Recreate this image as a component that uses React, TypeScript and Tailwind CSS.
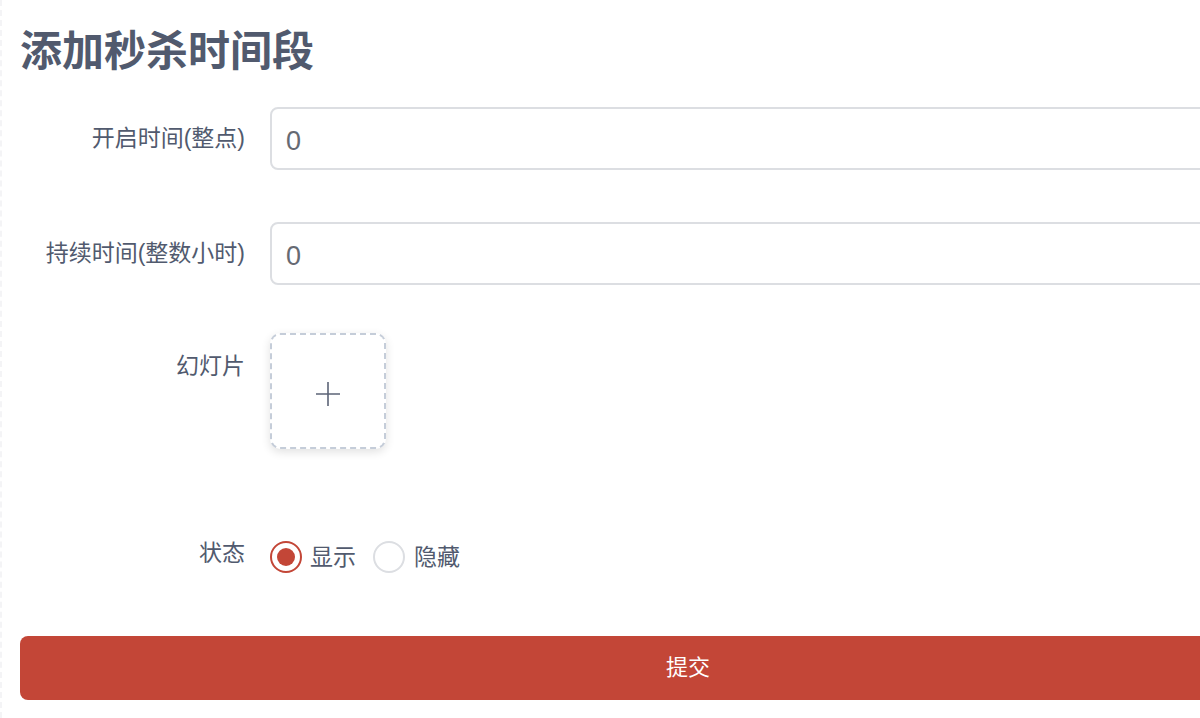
import { useState } from 'react';

const font = { fontFamily: '"Liberation Sans", "Noto Sans CJK SC", sans-serif' };

const Label = ({ text, pt = 'pt-[19px]' }: { text: string; pt?: string }) => (
  <div className={`w-[250px] shrink-0 pr-[25px] text-right text-[23px] leading-[24px] text-[#515a6e] ${pt}`}>
    {text}
  </div>
);

const App = () => {
  const [status, setStatus] = useState<'show' | 'hide'>('show');

  return (
    <div className="h-[718px] w-[1200px] overflow-hidden bg-white" style={font}>
      <div className="h-full border-l-2 border-dashed border-[#f4f4f6] pl-[18px] w-[1400px]">
        <h1 className="pt-[31px] text-[42px] leading-[42px] font-semibold text-[#515a6e]">添加秒杀时间段</h1>

        <div className="mt-[34px] flex">
          <Label text="开启时间(整点)" />
          <input
            defaultValue="0"
            className="h-[63px] w-[1086px] rounded-[8px] border-2 border-[#dcdee2] bg-white px-[14px] pt-[5px] text-[27px] text-[#666a73] outline-none"
          />
        </div>

        <div className="mt-[52px] flex">
          <Label text="持续时间(整数小时)" />
          <input
            defaultValue="0"
            className="h-[63px] w-[1086px] rounded-[8px] border-2 border-[#dcdee2] bg-white px-[14px] pt-[5px] text-[27px] text-[#666a73] outline-none"
          />
        </div>

        <div className="mt-[48px] flex">
          <Label text="幻灯片" pt="pt-[21px]" />
          <div className="flex h-[116px] w-[116px] items-center justify-center rounded-[10px] border-2 border-dashed border-[#c5cdd9] bg-white pt-[6px] shadow-[0_3px_10px_rgba(0,0,0,0.12)]">
            <svg width="26" height="26" viewBox="0 0 26 26" fill="none" stroke="#5c6477" strokeWidth="1.6">
              <path d="M13 1v24M1 13h24" />
            </svg>
          </div>
        </div>

        <div className="mt-[91px] flex items-center">
          <div className="w-[250px] shrink-0 pr-[25px] text-right text-[23px] leading-[24px] text-[#515a6e] -mt-[8px]">状态</div>
          <label className="flex cursor-pointer items-center" onClick={() => setStatus('show')}>
            <span
              className={`flex h-[32px] w-[32px] items-center justify-center rounded-full border-2 ${status === 'show' ? 'border-[#c34637]' : 'border-[#dcdee2]'}`}
            >
              {status === 'show' && <span className="h-[18px] w-[18px] rounded-full bg-[#c34637]" />}
            </span>
            <span className="ml-[8px] text-[23px] text-[#515a6e]">显示</span>
          </label>
          <label className="ml-[17px] flex cursor-pointer items-center" onClick={() => setStatus('hide')}>
            <span
              className={`flex h-[32px] w-[32px] items-center justify-center rounded-full border-2 ${status === 'hide' ? 'border-[#c34637]' : 'border-[#dcdee2]'}`}
            >
              {status === 'hide' && <span className="h-[18px] w-[18px] rounded-full bg-[#c34637]" />}
            </span>
            <span className="ml-[9px] text-[23px] text-[#515a6e]">隐藏</span>
          </label>
        </div>

        <button className="mt-[61px] h-[64px] w-[1336px] rounded-[8px] bg-[#c34637] text-[22px] text-white">
          提交
        </button>
      </div>
    </div>
  );
};

export default App;
